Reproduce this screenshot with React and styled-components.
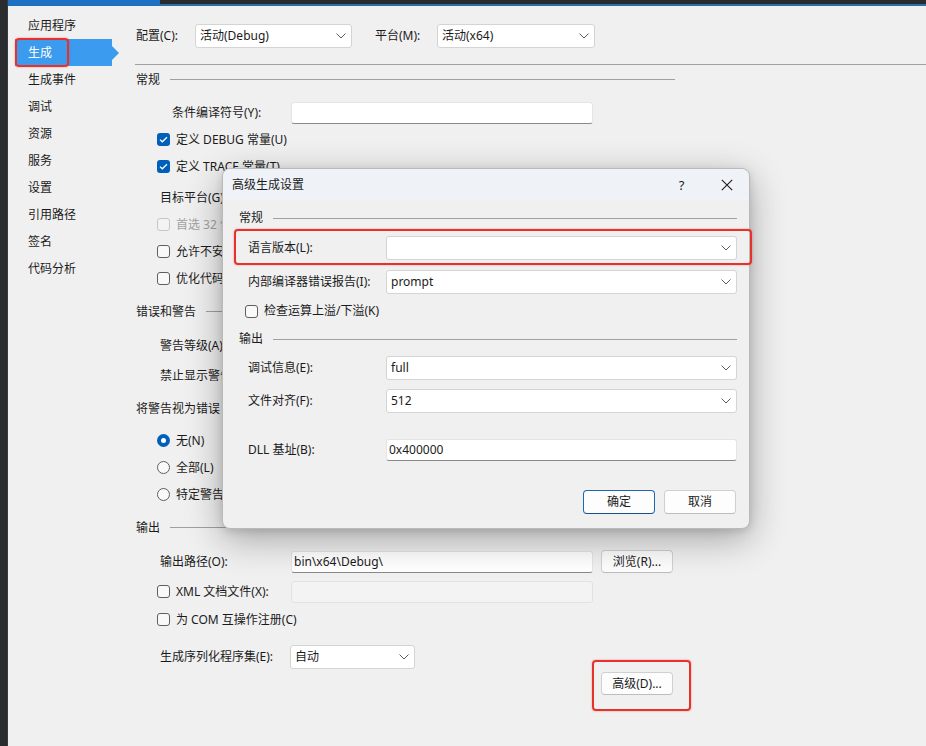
import React from 'react';
import styled, { createGlobalStyle, css } from 'styled-components';

const GlobalStyle = createGlobalStyle`
  html, body {
    margin: 0;
    padding: 0;
    background: #f0f0f0;
  }
  body {
    font-family: "Noto Sans", "Noto Sans CJK SC", sans-serif;
    font-size: 12px;
    line-height: 16px;
    color: #1b1b1b;
  }
`;

const Screen = styled.div`
  position: relative;
  width: 926px;
  height: 746px;
  display: flex;
  overflow: hidden;
  background: #f0f0f0;
`;

const EdgeStrip = styled.div`
  width: 7px;
  flex-shrink: 0;
  background: #2b2c2f;
  border-right: 1px solid #3a3b3e;
`;

const Window = styled.div`
  flex: 1;
  display: flex;
  flex-direction: column;
`;

const Chrome = styled.div`
  height: 4px;
  background: #2a2b2e;
  border-bottom: 2px solid #2a6fa8;
  display: flex;
`;

const ChromeTab = styled.div`
  width: 152px;
  height: 6px;
  background: #1d70c2;
`;

const Body = styled.div`
  flex: 1;
  display: flex;
`;

const Sidebar = styled.nav`
  width: 127px;
  flex-shrink: 0;
  padding-top: 6px;
  display: flex;
  flex-direction: column;
`;

const NavItem = styled.div`
  position: relative;
  height: 27px;
  width: 97px;
  margin-left: 7px;
  padding-left: 13px;
  box-sizing: border-box;
  display: flex;
  align-items: center;
  ${p =>
    p.$active &&
    css`
      background: #3b9bef;
      color: #fff;
      &::after {
        content: '';
        position: absolute;
        right: -7px;
        top: 50%;
        margin-top: -7px;
        border-left: 7px solid #3b9bef;
        border-top: 7px solid transparent;
        border-bottom: 7px solid transparent;
      }
    `}
`;

const RedMark = styled.span`
  position: absolute;
  top: ${p => p.$t}px;
  left: ${p => p.$l}px;
  right: ${p => p.$r}px;
  bottom: ${p => p.$b}px;
  border: 2px solid #e8312a;
  border-radius: 4px;
  box-shadow: 0 0 2px rgba(232, 49, 42, 0.5);
  pointer-events: none;
`;

const Main = styled.main`
  flex: 1;
  display: flex;
  flex-direction: column;
`;

const Toolbar = styled.div`
  height: 59px;
  box-sizing: border-box;
  padding: 18px 0 0 1px;
  border-bottom: 1px solid #a0a0a0;
  display: flex;
  align-items: flex-start;
`;

const ToolLabel = styled.span`
  width: ${p => p.$w}px;
  flex-shrink: 0;
  height: 24px;
  display: flex;
  align-items: center;
  margin-left: ${p => p.$ml || 0}px;
`;

const Sections = styled.div`
  width: 540px;
  display: flex;
  flex-direction: column;
`;

const Header = styled.div`
  height: ${p => p.$h || 27}px;
  margin-top: ${p => p.$mt || 0}px;
  padding-left: ${p => p.$pl || 1}px;
  display: flex;
  align-items: center;
  &::after {
    content: '';
    flex: 1;
    height: 1px;
    background: #a0a0a0;
    margin-left: 10px;
  }
`;

const Row = styled.div`
  position: relative;
  height: ${p => p.$h || 27}px;
  margin-top: ${p => p.$mt || 0}px;
  padding-left: ${p => p.$pl || 0}px;
  padding-right: ${p => p.$pr || 0}px;
  display: flex;
  align-items: center;
  justify-content: ${p => (p.$end ? 'flex-end' : 'flex-start')};
  gap: ${p => p.$gap || 0}px;
`;

const FieldLabel = styled.span`
  width: ${p => p.$w}px;
  padding-left: ${p => p.$pl || 0}px;
  box-sizing: border-box;
  flex-shrink: 0;
  display: flex;
  align-items: center;
  white-space: nowrap;
  overflow: hidden;
`;

const CheckText = styled.span`
  margin-left: 6px;
  white-space: nowrap;
  color: ${p => (p.$disabled ? '#a2a2a2' : 'inherit')};
`;

const SelectBox = styled.div`
  width: ${p => (p.$w ? `${p.$w}px` : 'auto')};
  flex: ${p => (p.$w ? '0 0 auto' : '1')};
  height: 24px;
  box-sizing: border-box;
  background: #fff;
  border: 1px solid #d4d4d4;
  border-radius: 3px;
  padding: 0 5px 0 4px;
  display: flex;
  align-items: center;
  justify-content: space-between;
`;

const TextInput = styled.div`
  width: ${p => (p.$w ? `${p.$w}px` : 'auto')};
  flex: ${p => (p.$w ? '0 0 auto' : '1')};
  height: 22px;
  box-sizing: border-box;
  padding: 0 4px 0 2px;
  border: 1px solid ${p => (p.$disabled ? '#e2e2e2' : '#e4e4e4')};
  border-bottom-color: ${p => (p.$disabled ? '#e2e2e2' : '#8a8a8a')};
  border-radius: 3px;
  background: ${p => (p.$disabled ? '#f3f3f3' : '#fff')};
  display: flex;
  align-items: center;
`;

const Button = styled.button`
  width: 72px;
  height: ${p => p.$h || 23}px;
  box-sizing: border-box;
  border-radius: 4px;
  font: inherit;
  color: #1b1b1b;
  background: #fdfdfd;
  border: 1px solid ${p => (p.$primary ? '#1f67b0' : '#d0d0d0')};
  border-bottom-color: ${p => (p.$primary ? '#14508e' : '#bdbdbd')};
  margin-left: ${p => p.$ml || 0}px;
  padding: 0;
`;

const MarkWrap = styled.span`
  position: relative;
  display: inline-flex;
`;

const CheckBox = styled.span`
  width: 13px;
  height: 13px;
  flex-shrink: 0;
  box-sizing: border-box;
  border-radius: 3px;
  display: flex;
  align-items: center;
  justify-content: center;
  ${p =>
    p.$checked
      ? css`
          background: #005fb8;
        `
      : css`
          border: 1px solid ${p.$disabled ? '#c6c6c6' : '#5f5f5f'};
          background: ${p.$disabled ? '#f3f3f3' : '#f9f9f9'};
        `}
`;

const RadioDot = styled.span`
  width: 13px;
  height: 13px;
  flex-shrink: 0;
  box-sizing: border-box;
  border-radius: 50%;
  display: flex;
  align-items: center;
  justify-content: center;
  ${p =>
    p.$checked
      ? css`
          background: #005fb8;
          &::after {
            content: '';
            width: 5px;
            height: 5px;
            border-radius: 50%;
            background: #fff;
          }
        `
      : css`
          border: 1px solid #5f5f5f;
          background: #f9f9f9;
        `}
`;

const Dialog = styled.section`
  position: absolute;
  left: 222px;
  top: 168px;
  width: 528px;
  box-sizing: border-box;
  background: #f0f0f0;
  border: 1px solid #bababa;
  border-radius: 8px;
  box-shadow: 0 10px 36px rgba(0, 0, 0, 0.32), 0 2px 8px rgba(0, 0, 0, 0.12);
`;

const TitleBar = styled.div`
  height: 31px;
  padding-left: 9px;
  background: #eff2f7;
  border-radius: 8px 8px 0 0;
  display: flex;
  align-items: center;
`;

const Title = styled.span`
  flex: 1;
`;

const TitleButton = styled.span`
  width: 45px;
  height: 31px;
  display: flex;
  align-items: center;
  justify-content: center;
  font-size: 13px;
`;

const DialogBody = styled.div`
  padding: 8px 12px 14px 15px;
  display: flex;
  flex-direction: column;
`;

const Chevron = () => (
  <svg width="10" height="6" viewBox="0 0 10 6">
    <path d="M0.5 0.5 5 5 9.5 0.5" fill="none" stroke="#5c5c5c" strokeWidth="1" />
  </svg>
);

const Select = ({ value, w }) => (
  <SelectBox $w={w}>
    <span>{value}</span>
    <Chevron />
  </SelectBox>
);

const Check = ({ checked, disabled, children }) => (
  <>
    <CheckBox $checked={checked} $disabled={disabled}>
      {checked && (
        <svg width="9" height="7" viewBox="0 0 9 7">
          <path d="M1 3.6 3.3 5.8 8 1.2" fill="none" stroke="#fff" strokeWidth="1.3" />
        </svg>
      )}
    </CheckBox>
    <CheckText $disabled={disabled}>{children}</CheckText>
  </>
);

const Radio = ({ checked, children }) => (
  <>
    <RadioDot $checked={checked} />
    <CheckText>{children}</CheckText>
  </>
);

const navItems = ['应用程序', '生成', '生成事件', '调试', '资源', '服务', '设置', '引用路径', '签名', '代码分析'];

export default function App() {
  return (
    <>
      <GlobalStyle />
      <Screen>
        <EdgeStrip />
        <Window>
          <Chrome>
            <ChromeTab />
          </Chrome>
          <Body>
            <Sidebar>
              {navItems.map(item => (
                <NavItem key={item} $active={item === '生成'}>
                  {item}
                  {item === '生成' && <RedMark $t={-1} $l={0} $r={43} $b={-1} />}
                </NavItem>
              ))}
            </Sidebar>
            <Main>
              <Toolbar>
                <ToolLabel $w={59}>配置(C):</ToolLabel>
                <Select w={157} value="活动(Debug)" />
                <ToolLabel $w={62} $ml={23}>平台(M):</ToolLabel>
                <Select w={158} value="活动(x64)" />
              </Toolbar>
              <Sections>
                <Header $mt={1}>常规</Header>
                <Row $mt={6} $pl={22}>
                  <FieldLabel $w={134} $pl={15}>条件编译符号(Y):</FieldLabel>
                  <TextInput $w={302} />
                </Row>
                <Row $pl={22}>
                  <Check checked>定义 DEBUG 常量(U)</Check>
                </Row>
                <Row $pl={22}>
                  <Check checked>定义 TRACE 常量(T)</Check>
                </Row>
                <Row $mt={4} $pl={22}>
                  <FieldLabel $w={134} $pl={3}>目标平台(G):</FieldLabel>
                  <Select w={124} value="Any CPU" />
                </Row>
                <Row $pl={22}>
                  <Check disabled>首选 32 位(P)</Check>
                </Row>
                <Row $pl={22}>
                  <Check>允许不安全代码(F)</Check>
                </Row>
                <Row $pl={22}>
                  <Check>优化代码(Z)</Check>
                </Row>
                <Header $mt={6}>错误和警告</Header>
                <Row $mt={7} $pl={22}>
                  <FieldLabel $w={134} $pl={3}>警告等级(A):</FieldLabel>
                  <Select w={124} value="4" />
                </Row>
                <Row $mt={3} $pl={22}>
                  <FieldLabel $w={134} $pl={3}>禁止显示警告(S):</FieldLabel>
                  <TextInput $w={302} />
                </Row>
                <Header $mt={6}>将警告视为错误</Header>
                <Row $mt={5} $pl={22}>
                  <Radio checked>无(N)</Radio>
                </Row>
                <Row $pl={22}>
                  <Radio>全部(L)</Radio>
                </Row>
                <Row $pl={22}>
                  <Radio>特定警告(S):</Radio>
                </Row>
                <Header $mt={6}>输出</Header>
                <Row $mt={7} $pl={22}>
                  <FieldLabel $w={134} $pl={3}>输出路径(O):</FieldLabel>
                  <TextInput $w={302}>bin\x64\Debug\</TextInput>
                  <Button $ml={8}>浏览(R)...</Button>
                </Row>
                <Row $mt={3} $pl={22}>
                  <FieldLabel $w={134}>
                    <Check>XML 文档文件(X):</Check>
                  </FieldLabel>
                  <TextInput $w={302} $disabled />
                </Row>
                <Row $mt={1} $pl={22}>
                  <Check>为 COM 互操作注册(C)</Check>
                </Row>
                <Row $mt={10} $pl={22}>
                  <FieldLabel $w={133} $pl={3}>生成序列化程序集(E):</FieldLabel>
                  <Select w={125} value="自动" />
                </Row>
                <Row $end $pr={2}>
                  <MarkWrap>
                    <Button>高级(D)...</Button>
                    <RedMark $t={-12} $l={-9} $r={-18} $b={-16} />
                  </MarkWrap>
                </Row>
              </Sections>
            </Main>
          </Body>
        </Window>

        <Dialog>
          <TitleBar>
            <Title>高级生成设置</Title>
            <TitleButton>?</TitleButton>
            <TitleButton>
              <svg width="12" height="12" viewBox="0 0 12 12">
                <path d="M0.8 0.8 11.2 11.2 M11.2 0.8 0.8 11.2" stroke="#1b1b1b" strokeWidth="1.1" />
              </svg>
            </TitleButton>
          </TitleBar>
          <DialogBody>
            <Header $h={20} $pl={1}>常规</Header>
            <Row $h={24} $mt={8} $pl={10}>
              <FieldLabel $w={138}>语言版本(L):</FieldLabel>
              <Select value="" />
              <RedMark $t={-7} $l={-4} $r={-15} $b={-5} />
            </Row>
            <Row $h={24} $mt={10} $pl={10}>
              <FieldLabel $w={138}>内部编译器错误报告(I):</FieldLabel>
              <Select value="prompt" />
            </Row>
            <Row $h={24} $mt={5} $pl={7}>
              <Check>检查运算上溢/下溢(K)</Check>
            </Row>
            <Header $h={20} $mt={6} $pl={1}>输出</Header>
            <Row $h={24} $mt={7} $pl={10}>
              <FieldLabel $w={138}>调试信息(E):</FieldLabel>
              <Select value="full" />
            </Row>
            <Row $h={24} $mt={9} $pl={10}>
              <FieldLabel $w={138}>文件对齐(F):</FieldLabel>
              <Select value="512" />
            </Row>
            <Row $h={24} $mt={25} $pl={10}>
              <FieldLabel $w={138}>DLL 基址(B):</FieldLabel>
              <TextInput>0x400000</TextInput>
            </Row>
            <Row $h={24} $mt={28} $end $gap={9} $pr={1}>
              <Button $h={24} $primary>确定</Button>
              <Button $h={24}>取消</Button>
            </Row>
          </DialogBody>
        </Dialog>
      </Screen>
    </>
  );
}
